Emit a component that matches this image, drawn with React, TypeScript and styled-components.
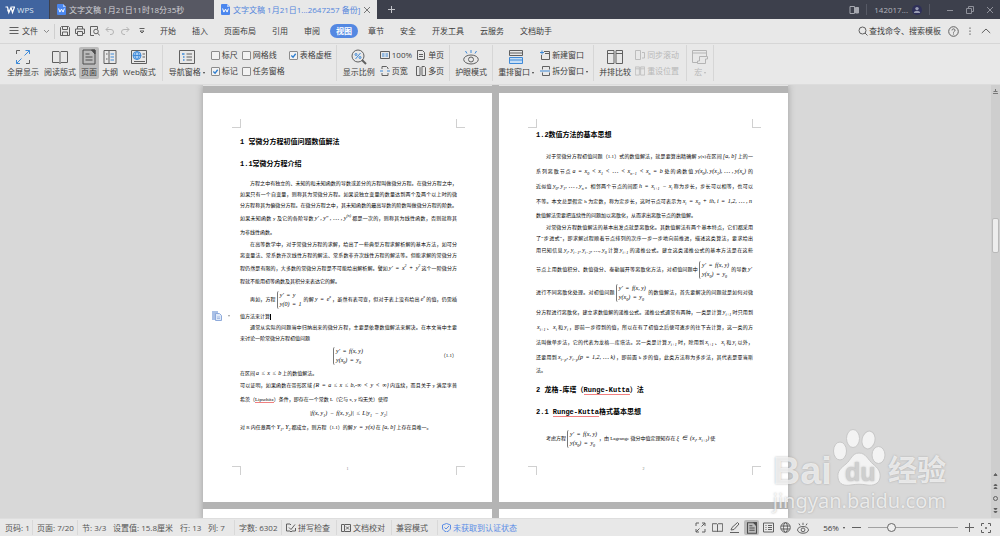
import React from "react";
import styled, { createGlobalStyle, css } from "styled-components";

const GlobalStyle = createGlobalStyle`
  * { box-sizing: border-box; }
  body { margin: 0; }
  body, button, input {
    font-family: "Open Sans", "Noto Sans CJK SC", sans-serif;
    font-size: 8px;
    line-height: 12px;
    color: #3c3c3c;
  }
  button { border: 0; padding: 0; background: none; white-space: nowrap; }
  svg { display: block; flex: none; }
`;

const Shell = styled.div`
  display: flex;
  flex-direction: column;
  height: 100vh;
  background: #e8e8e8;
  overflow: hidden;
`;

/* ---------- title bar ---------- */
const TitleBar = styled.header`
  display: flex;
  align-items: stretch;
  height: 19px;
  flex: none;
  background: #3d404c;
`;
const Brand = styled.button`
  display: flex;
  align-items: center;
  gap: 2px;
  width: 49px;
  padding-left: 5px;
  margin-right: 1px;
  background: #40649f;
  color: #dfe6f2;
`;
const Tab = styled.button<{ $active?: boolean }>`
  display: flex;
  align-items: center;
  gap: 3px;
  width: ${(p) => (p.$active ? 163 : 164)}px;
  padding-left: 7px;
  background: ${(p) => (p.$active ? "#e8e8e8" : "#575863")};
  color: ${(p) => (p.$active ? "#5486dc" : "#d2d2d6")};
`;
const AddTab = styled.button`
  display: flex;
  align-items: center;
  margin-left: 10px;
`;
const TitleTools = styled.div`
  display: flex;
  align-items: center;
  margin-left: auto;
  padding-right: 6px;
  gap: 7px;
  color: #a6a8b0;
`;
const Account = styled.button`
  display: flex;
  align-items: center;
  gap: 4px;
  color: #b4b5bc;
`;
const WindowButtons = styled.div`
  display: flex;
  align-items: center;
  gap: 12px;
  padding-left: 9px;
`;
const Rule = styled.i<{ $h: number; $color?: string }>`
  width: 1px;
  height: ${(p) => p.$h}px;
  flex: none;
  background: ${(p) => p.$color || "#cfcfcf"};
`;

/* ---------- menu ---------- */
const MenuBar = styled.nav`
  display: flex;
  align-items: center;
  height: 25px;
  flex: none;
  padding: 0 9px;
  border-bottom: 1px solid #d6d6d6;
`;
const FileButton = styled.button`
  display: flex;
  align-items: center;
  gap: 3px;
  margin-right: 5px;
`;
const QuickTools = styled.div`
  display: flex;
  align-items: center;
  gap: 5px;
  width: 94px;
  margin-left: 5px;
`;
const MenuItems = styled.div`
  display: flex;
  gap: 4px;
`;
const MenuItem = styled.button<{ $active?: boolean }>`
  height: 14px;
  padding: 0 6px;
  border-radius: 7px;
  ${(p) => p.$active && css`background: #5488e2; color: #fff; font-weight: 700;`}
`;
const MenuRight = styled.div`
  display: flex;
  align-items: center;
  gap: 7px;
  margin-left: auto;
`;
const SearchButton = styled.button`
  display: flex;
  align-items: center;
  gap: 1px;
`;

/* ---------- ribbon ---------- */
const Ribbon = styled.div`
  display: flex;
  align-items: center;
  height: 41px;
  flex: none;
  padding: 0 1px 2px;
  border-bottom: 1px solid #dcdcdc;
`;
const Group = styled.div<{ $gap?: number; $start?: number; $end?: number }>`
  display: flex;
  align-items: center;
  gap: ${(p) => p.$gap ?? 1}px;
  height: 36px;
  padding-left: ${(p) => p.$start ?? 4}px;
  padding-right: ${(p) => p.$end ?? 4}px;
  border-right: 1px solid #d6d6d6;
`;
const BigButton = styled.button<{ $active?: boolean; $off?: boolean }>`
  display: flex;
  flex-direction: column;
  align-items: center;
  gap: 1px;
  height: 32px;
  padding: 2px 2px 0;
  border-radius: 2px;
  background: ${(p) => (p.$active ? "#bbbbbb" : "none")};
  color: ${(p) => (p.$off ? "#b8b8b8" : "#3c3c3c")};
`;
const SmallGrid = styled.div<{ $cols: number }>`
  display: grid;
  grid-template-columns: repeat(${(p) => p.$cols}, auto);
  column-gap: 4px;
  row-gap: 4px;
`;
const SmallButton = styled.button<{ $off?: boolean }>`
  display: flex;
  align-items: center;
  gap: 2px;
  color: ${(p) => (p.$off ? "#b8b8b8" : "#3c3c3c")};
`;
const Check = styled.label`
  display: flex;
  align-items: center;
  gap: 2px;
  white-space: nowrap;
`;
const Box = styled.input`
  appearance: none;
  width: 9px;
  height: 9px;
  margin: 0;
  border: 1px solid #8c8c8c;
  border-radius: 1px;
  background: #f2f2f2;
  &:checked {
    background: #f2f2f2
      url("data:image/svg+xml,%3Csvg xmlns='http://www.w3.org/2000/svg' viewBox='0 0 8 8'%3E%3Cpath d='M1.5 4l2 2 3-4' fill='none' stroke='%232f7fd0' stroke-width='1.5'/%3E%3C/svg%3E");
  }
`;
const Arrow = styled.i`
  display: inline-block;
  margin-left: 2px;
  vertical-align: middle;
  border: 1px solid transparent;
  border-top: 2px solid currentColor;
  border-bottom: 0;
`;

/* ---------- document ---------- */
const Workspace = styled.main`
  position: relative;
  display: flex;
  flex: 1;
  min-height: 0;
  overflow: hidden;
  background: #d8d8d8;
`;
const Canvas = styled.div`
  display: flex;
  justify-content: center;
  align-items: flex-start;
  flex: 1;
  overflow: hidden;
`;
const Sheets = styled.div`
  display: grid;
  grid-template-columns: 289px 289px;
  gap: 7px;
  background: #b4b4b4;
  box-shadow: 0 0 7px #9c9c9c;
`;
const Edge = styled.div<{ $h: number }>`
  height: ${(p) => p.$h}px;
  background: ${(p) => (p.$h > 1 ? "#fff" : "#e4e4e4")};
`;
const Page = styled.article`
  position: relative;
  height: 409px;
  padding: 31px 35px 0 37px;
  background: #fff;
  color: #000;
  font-family: "Liberation Serif", "Noto Sans CJK SC", serif;
`;
const Corner = styled.i<{ $x: "left" | "right"; $y: "top" | "bottom" }>`
  position: absolute;
  width: 9px;
  height: 9px;
  ${(p) => (p.$x === "left" ? "left: 29px" : "right: 27px")};
  ${(p) => (p.$y === "top" ? "top: 26px" : "bottom: 27px")};
  border: 0 solid #d0d0d0;
  ${(p) => (p.$x === "left" ? "border-right-width: 1px" : "border-left-width: 1px")};
  ${(p) => (p.$y === "top" ? "border-bottom-width: 1px" : "border-top-width: 1px")};
`;
const PageNumber = styled.footer`
  position: absolute;
  left: 0;
  right: 0;
  bottom: 28px;
  text-align: center;
  font-size: 4px;
  line-height: 11px;
  color: #777;
`;
const Title = styled.h2<{ $top?: number }>`
  margin: ${(p) => p.$top ?? 0}px 0 0;
  font-family: "Liberation Mono", "Noto Sans CJK SC", monospace;
  font-size: 7px;
  line-height: 22px;
  font-weight: 700;
  white-space: nowrap;
`;
const Body = styled.div`
  margin-top: 3px;
  font-size: 5px;
`;
const Line = styled.div<{ $h?: 11 | 13 | 15 | 24; $full?: boolean; $indent?: boolean }>`
  height: ${(p) => p.$h ?? 11}px;
  line-height: ${(p) => p.$h ?? 11}px;
  padding-left: ${(p) => (p.$indent ? 10 : 0)}px;
  white-space: nowrap;
  text-align: justify;
  text-align-last: ${(p) => (p.$full ? "justify" : "left")};
`;
const Display = styled(Line)`
  display: grid;
  grid-template-columns: 1fr auto 1fr;
  align-items: center;
  text-align-last: right;
`;
const Formula = styled.span`
  display: inline-block;
  padding: 0 1px;
  font-style: italic;
  font-size: 6px;
  white-space: pre;
  text-align-last: left;
  sub, sup { font-size: 4px; line-height: 0; }
`;
const Operator = styled.span`
  margin: 0 1px;
`;
const Cases = styled.span`
  display: inline-block;
  vertical-align: middle;
  padding-left: 1px;
  margin: 0 1px;
  border-left: 1px solid #777;
  border-radius: 2px;
  line-height: 9px;
  text-align-last: left;
  > span { display: block; }
`;
const Misspelt = styled.span`
  border-bottom: 1px solid #f08080;
`;
const Caret = styled.i`
  display: inline-block;
  width: 1px;
  height: 6px;
  vertical-align: middle;
  background: #000;
`;
const PasteTag = styled.button`
  position: absolute;
  left: 9px;
  top: 217px;
  display: flex;
  align-items: center;
  gap: 4px;
  color: #999;
`;
const Scroll = styled.aside`
  display: flex;
  flex-direction: column;
  align-items: center;
  width: 9px;
  padding: 3px 0 4px;
  background: #cecece;
`;
const Thumb = styled.div`
  width: 7px;
  height: 35px;
  border: 1px solid #b9b9b9;
  border-radius: 2px;
  background: #ededed;
  margin-top: 123px;
`;
const PageJumps = styled.div`
  display: flex;
  flex-direction: column;
  gap: 5px;
  margin-top: auto;
`;
const Watermark = styled.div`
  position: absolute;
  right: 54px;
  bottom: 6px;
  color: rgba(255, 255, 255, 0.72);
  font-family: "Noto Sans", sans-serif;
  font-size: 20px;
  line-height: 22px;
  text-shadow: 0 0 2px rgba(130, 130, 130, 0.6);
`;
const WatermarkTop = styled.div`
  display: flex;
  align-items: flex-end;
  height: 57px;
  margin-bottom: 4px;
  font-family: "Liberation Sans", "Noto Sans CJK SC", sans-serif;
  font-weight: 700;
  font-size: 38px;
  line-height: 30px;
  small { font-size: 29px; }
`;

/* ---------- status bar ---------- */
const StatusBar = styled.footer`
  display: flex;
  align-items: center;
  height: 18px;
  flex: none;
  padding: 0 9px 0 5px;
  border-top: 1px solid #dedede;
  color: #555;
`;
const Stat = styled.button<{ $w: number; $rule?: boolean; $blue?: boolean }>`
  display: flex;
  align-items: center;
  gap: 2px;
  width: ${(p) => p.$w}px;
  height: 15px;
  margin-right: 4px;
  border-right: 1px solid ${(p) => (p.$rule ? "#d9d9d9" : "transparent")};
  color: ${(p) => (p.$blue ? "#5b8de6" : "#555")};
`;
const Views = styled.div`
  display: flex;
  align-items: center;
  gap: 2px;
  margin-left: auto;
  margin-right: 13px;
`;
const ViewButton = styled.button<{ $active?: boolean }>`
  display: grid;
  place-items: center;
  width: 15px;
  height: 15px;
  border-radius: 2px;
  background: ${(p) => (p.$active ? "#bcbcbc" : "none")};
`;
const Zoom = styled.div`
  display: flex;
  align-items: center;
  gap: 7px;
`;
const Slider = styled.input`
  appearance: none;
  width: 90px;
  height: 10px;
  margin: 0;
  background: linear-gradient(#a2a2a2, #a2a2a2) center / 100% 1px no-repeat;
  &::-webkit-slider-thumb {
    appearance: none;
    width: 9px;
    height: 9px;
    border: 1px solid #666;
    border-radius: 50%;
    background: #efefef;
  }
`;

/* ---------- icons ---------- */
const B = "#3f8ad8";
type IconProps = { s?: number; w?: number; c?: string; vb?: number; children: React.ReactNode };
const Icon = ({ s = 16, w = 1, c = "#606060", vb, children }: IconProps) => (
  <svg width={s} height={s} viewBox={`0 0 ${vb ?? s} ${vb ?? s}`} fill="none" stroke={c} strokeWidth={w} aria-hidden="true">
    {children}
  </svg>
);
const DocLogo = () => (
  <svg width="9" height="11" viewBox="0 0 9 11" aria-hidden="true">
    <path d="M1 0h5l3 3v7a1 1 0 0 1-1 1H1a1 1 0 0 1-1-1V1a1 1 0 0 1 1-1z" fill="#4a86ee" />
    <path d="M6 0l3 3H6z" fill="#a9c8fb" />
    <path d="M1.6 4.5l1.3 3.6 1.6-3 1.6 3 1.3-3.6" fill="none" stroke="#fff" />
  </svg>
);
const Plus = ({ c }: { c: string }) => (
  <Icon s={9} c={c}><path d="M4.5 1v7M1 4.500h7" /></Icon>
);
const EyeIcon = ({ s, c }: { s: number; c?: string }) => (
  <Icon s={s} vb={16} w={s > 12 ? 1 : 1.3}>
    <ellipse cx="8" cy="10.500" rx="7.300" ry="4.500" />
    <circle cx="8" cy="10.500" r="2.500" />
    <path d="M8 1v3M2.500 2l1.500 2.500M13.500 2L12 4.500" stroke={c} />
  </Icon>
);
const ColumnsIcon = ({ s, c }: { s: number; c?: string }) => (
  <Icon s={s} vb={16} c={c} w={s > 12 ? 1 : 1.4}><path d="M.5 1.500h6.500v13H.5zM9 1.500h6.500v13H9zM.5 4.500H7M9 4.500h6.500" /></Icon>
);
const BookIcon = ({ s }: { s: number }) => (
  <Icon s={s} vb={16} w={s > 12 ? 1 : 1.4}><path d="M8 3.500L7 2.500H.5v11H7l1 1 1-1h6.500v-11H9zM8 3.500v11" /></Icon>
);
const PageIcon = ({ s }: { s: number }) => (
  <Icon s={s} vb={16} c="#4c4c4c" w={s > 12 ? 1 : 1.4}>
    <path d="M2 1h12v14H2zM4.500 5h4M4.500 8h7M4.500 11h7" />
    <path d="M10.500 1H14v4z" fill="#4c4c4c" />
  </Icon>
);

/* ---------- formula helpers ---------- */
const M = ({ t }: { t: string }) => (
  <Formula>
    {t.split(/([_^](?:\{[^}]*\}|.)| [=<≤−+∈] )/).map((part, i) => {
      const inner = part.slice(1).replace(/[{}]/g, "");
      if (part[0] === "_") return <sub key={i}>{inner}</sub>;
      if (part[0] === "^") return <sup key={i}>{inner}</sup>;
      if (/^ . $/.test(part)) return <Operator key={i}>{part}</Operator>;
      return part;
    })}
  </Formula>
);
const Sys = ({ a = "y′ = f(x, y)", b = "y(x_0) = y_0" }: { a?: string; b?: string }) => (
  <Cases><span><M t={a} /></span><span><M t={b} /></span></Cases>
);
const Corners = () => (
  <>
    <Corner $x="left" $y="top" /><Corner $x="right" $y="top" />
    <Corner $x="left" $y="bottom" /><Corner $x="right" $y="bottom" />
  </>
);

const FirstPage = () => (
  <Page>
    <Corners />
    <Title $top={7}>1 常微分方程初值问题数值解法</Title>
    <Title>1.1常微分方程介绍</Title>
    <Body>
      <Line $full $indent>方程之中有独立的、未知的和未知函数的导数或差分的方程叫做微分方程。在微分方程之中，</Line>
      <Line $full>如果只有一个自变量，则称其为常微分方程。如果说独立变量的数量达到两个及两个以上时的微</Line>
      <Line $full>分方程称其为偏微分方程。在微分方程之中，其未知函数的最高导数的阶数叫做微分方程的阶数。</Line>
      <Line $full $h={15}>如果未知函数 y 及它的各阶导数<M t="y′ , y″ , ⋯ , y^{(n)}" />都是一次的，则称其为线性函数，否则就称其</Line>
      <Line $h={13}>为非线性函数。</Line>
      <Line $full $indent>在高等数学中，对于常微分方程的求解，给出了一些典型方程求解析解的基本方法，如可分</Line>
      <Line $full>离变量法、常系数齐次线性方程的解法、常系数非齐次线性方程的解法等。但能求解的常微分方</Line>
      <Line $full $h={15}>程仍然是有限的，大多数的常微分方程是不可能给出解析解。譬如<M t="y′ = x^2 + y^2" />这个一阶微分方</Line>
      <Line>程就不能用初等函数及其积分来表达它的解。</Line>
      <Line $full $indent $h={24}>再如，方程<Sys a="y′ = y" b="y(0) = 1" />的解<M t="y = e^x" />，虽然有表可查，但对于表上没有给出<M t="e^x" />的值，仍需插</Line>
      <Line>值方法来计算<Caret /></Line>
      <Line $full $indent>通常从实际的问题当中归纳出来的微分方程，主要是依靠数值解法来解决。在本文当中主要</Line>
      <Line>来讨论一阶常微分方程初值问题</Line>
      <Display $h={24}><span /><Sys /><span>（1.1）</span></Display>
      <Line>在区间<M t="a ≤ x ≤ b" />上的数值解法。</Line>
      <Line $full $h={13}>可以证明，如果函数在带形区域<M t="{R = a ≤ x ≤ b,-∞ < y < ∞}" />内连续，而且关于 y 满足李普</Line>
      <Line $h={15}>希茨（<Misspelt>Lipschitz</Misspelt>）条件，即存在一个常数 L（它与 x, y 均无关）使得</Line>
      <Display $h={13}><span /><M t="|f(x, y_1) − f(x, y_2)| ≤ L|y_1 − y_2|" /><span /></Display>
      <Line $h={15}>对 R 内任意两个<M t="Y_1, Y_2" />都成立，则方程（1.1）的解<M t="y = y(x)" />在<M t="[a, b]" />上存在且唯一。</Line>
    </Body>
    <PasteTag aria-label="粘贴选项">
      <svg width="10" height="11" viewBox="0 0 10 11" aria-hidden="true">
        <path d="M0 1h6v9H0z" fill="#a9c0e6" />
        <path d="M3.500 3.500h4l2 2v5h-6z" fill="#dfe9f8" stroke="#8eaadb" />
        <path d="M5 7h3M5 8.500h3" stroke="#8eaadb" strokeWidth=".7" />
      </svg>
      <Arrow />
    </PasteTag>
    <PageNumber>1</PageNumber>
  </Page>
);

const SecondPage = () => (
  <Page>
    <Corners />
    <Title>1.2数值方法的基本思想</Title>
    <Body>
      <Line $full $indent $h={15}>对于常微分方程初值问题（1.1）式的数值解法，就是要算出精确解 y(x)在区间<M t="[a, b]" />上的一</Line>
      <Line $full $h={15}>系列离散节点<M t="a = x_0 < x_1 < ⋯ < x_{n−1} < x_n = b" />处的函数值<M t="y(x_0), y(x_1), ⋯ , y(x_n)" />的</Line>
      <Line $full $h={15}>近似值<M t="y_0, y_1, ⋯ , y_n" />。相邻两个节点的间距<M t="h = x_{i+1} − x_i" />称为步长，步长可以相等，也可以</Line>
      <Line $full $h={15}>不等。本文总是假定 h 为定数，称为定步长，这时节点可表示为<M t="x_i = x_0 + ih, i = 1,2, ⋯ , n" /></Line>
      <Line $h={13}>数值解法需要把连续性的问题加以离散化，从而求出离散节点的数值解。</Line>
      <Line $full $indent>对常微分方程数值解法的基本出发点就是离散化。其数值解法有两个基本特点，它们都采用</Line>
      <Line $full>了“步进式”，即求解过程顺着节点排列的次序一步一步地向前推进，描述这类算法，要求给出</Line>
      <Line $full $h={13}>用已知信息<M t="y_i, y_{i−1}, y_{i−2}, …, y_0" />计算<M t="y_{i+1}" />的递推公式。建立这类递推公式的基本方法是在这些</Line>
      <Line $full $h={24}>节点上用数值积分、数值微分、泰勒展开等离散化方法，对初值问题中<Sys />的导数<M t="y′" /></Line>
      <Line $full $h={24}>进行不同离散化处理。对初值问题<Sys />的数值解法，首先要解决的问题就是如何对微</Line>
      <Line $full $h={15}>分方程进行离散化，建立求数值解的递推公式。递推公式通常有两种，一类是计算<M t="y_{i+1}" />时只用到</Line>
      <Line $full $h={15}><M t="x_{i+1}" />、<M t="x_i" />和<M t="y_i" />，即前一步得到的值，所以在有了初值之后便可逐步的往下去计算，这一类的方</Line>
      <Line $full $h={15}>法叫做单步法，它的代表为龙格—库塔法。另一类是计算<M t="y_{i+1}" />时，除用到<M t="x_{i+1}" />、<M t="x_i" />和<M t="y_i" />以外，</Line>
      <Line $full $h={15}>还要用到<M t="x_{i−p}, y_{i−p}(p = 1,2, ⋯ k)" />，即前面 k 步的值，此类方法称为多步法，其代表是亚当斯</Line>
      <Line>法。</Line>
    </Body>
    <Title $top={3}>2 龙格-库塔（<Misspelt>Runge-Kutta</Misspelt>）法</Title>
    <Title>2.1 <Misspelt>Runge-Kutta</Misspelt>格式基本思想</Title>
    <Body>
      <Line $indent $h={24}>考虑方程<Sys />，由 Lagrange 微分中值定理知存在<M t="ξ ∈ (x_i, x_{i+1})" />使</Line>
    </Body>
    <PageNumber>2</PageNumber>
  </Page>
);

const menu = ["开始", "插入", "页面布局", "引用", "审阅", "视图", "章节", "安全", "开发工具", "云服务", "文档助手"];

export default function App() {
  return (
    <Shell>
      <GlobalStyle />
      <TitleBar>
        <Brand>
          <Icon s={10} c="#fff" w={1.2}><path d="M.5 2h2l1.300 5.500L6 2.500l1.500 5L9.500 2H6.800M2.500 4.500L4 8" /></Icon>
          WPS
        </Brand>
        <Tab><DocLogo />文字文稿 1月21日11时18分35秒</Tab>
        <Tab $active>
          <DocLogo />文字文稿 1月21日1...2647257 备份]
          <Icon s={8} c="#777"><path d="M1 1l6 6M7 1L1 7" /></Icon>
        </Tab>
        <AddTab aria-label="新建"><Plus c="#c4c5ca" /></AddTab>
        <TitleTools>
          <Icon s={10} c="#a6a8b0"><path d="M1 1.500h4.500v7H1z" /><path d="M6.500 2.500h3v5.500h-3z" fill="#a6a8b0" /></Icon>
          <Rule $h={11} $color="#575a66" />
          <Account>
            142017...
            <svg width="10" height="10" viewBox="0 0 10 10" aria-hidden="true">
              <circle cx="5" cy="5" r="5" fill="#2f3059" />
              <circle cx="5" cy="3.600" r="1.700" fill="#9a9db3" />
              <path d="M1.800 8c.3-3 6.100-3 6.400 0z" fill="#9a9db3" />
            </svg>
          </Account>
          <Rule $h={11} $color="#575a66" />
          <WindowButtons>
            <Icon s={8} c="#8f919a"><path d="M1 4.500h6" /></Icon>
            <Icon s={8} c="#8f919a"><path d="M.5 2.500h5v5h-5zM2.500 2.500v-2h5v5h-2" /></Icon>
            <Icon s={8} c="#8f919a"><path d="M1 1l6 6M7 1L1 7" /></Icon>
          </WindowButtons>
        </TitleTools>
      </TitleBar>

      <MenuBar>
        <FileButton>
          <Icon s={10}><path d="M.5 1.500h9M.5 4.500h9M.5 7.500h9" /></Icon>
          文件
          <Icon s={8} c="#8a8a8a"><path d="M3 3l2.500 2.500L8 3" /></Icon>
        </FileButton>
        <Rule $h={15} />
        <QuickTools>
          <Icon s={10}><path d="M.5 1.500l1-1h7l1 1v8h-9zM2.500.5v3h5v-3M2.500 9.500V6h5v3.500" /></Icon>
          <Icon s={10}><path d="M2.500 3V.500h5V3M2.500 7.500h-2V3h9v4.500h-2M2.500 5.500h5v4h-5z" /></Icon>
          <Icon s={10}><path d="M4 9.500H.5v-9h7V3" /><circle cx="6" cy="5.500" r="2.300" /><path d="M7.700 7.200l2 2.300" /></Icon>
          <Icon s={10} c="#b4b4b4"><path d="M3.500 1L1 3.500 3.500 6M1 3.500h5a2.500 2.500 0 0 1 0 5H5" /></Icon>
          <Icon s={10} c="#b4b4b4"><path d="M6.500 1L9 3.500 6.500 6M9 3.500H4a2.500 2.500 0 0 0 0 5h1" /></Icon>
          <Icon s={10}><path d="M4.500 2.500h5M5 5h4L7 7z" /></Icon>
        </QuickTools>
        <MenuItems>
          {menu.map((m) => <MenuItem key={m} $active={m === "视图"}>{m}</MenuItem>)}
        </MenuItems>
        <MenuRight>
          <SearchButton>
            <Icon s={10}><circle cx="4.500" cy="4.500" r="3.500" /><path d="M7 7l2.500 2.500" /></Icon>
            查找命令、搜索模板
          </SearchButton>
          <Icon s={11}><circle cx="5.500" cy="5.500" r="4.800" /><path d="M4 4.400c0-2 3-2 3 0 0 1-1.500 1-1.500 2.200M5.500 7.500v1" /></Icon>
          <Icon s={8} w={1.2}><path d="M4 .5v1.300M4 3.500v1.300M4 6.500v1.300" /></Icon>
          <Icon s={10}><path d="M.8 7L5 3l4.200 4" /></Icon>
        </MenuRight>
      </MenuBar>

      <Ribbon>
        <Group>
          <BigButton>
            <Icon>
              <path d="M1.500 5V1.500H5M14.500 11v3.500H11" />
              <path d="M9.500 6.500l5-5M10.500 1.500h4V5M6.500 9.500l-5 5M1.500 11v3.500H5" stroke={B} />
            </Icon>
            全屏显示
          </BigButton>
          <BigButton><BookIcon s={16} />阅读版式</BigButton>
          <BigButton $active><PageIcon s={16} />页面</BigButton>
          <BigButton>
            <Icon><path d="M2 1.500h12v13H2zM7 1.500v13M4 5h1.500M4 10h1.500" /><path d="M8.500 5H12M8.500 8H12M8.500 11H12" stroke={B} /></Icon>
            大纲
          </BigButton>
          <BigButton>
            <Icon><path d="M.5 1.500h15v13H.5zM11.500 5H14M11.500 8H14M3 12.500h11" /><circle cx="6" cy="6.500" r="4" stroke={B} fill="#a9cdf3" /><path d="M2 6.500h8M6 2.500c-2.500 2-2.500 6 0 8M6 2.500c2.500 2 2.500 6 0 8" stroke={B} /></Icon>
            Web版式
          </BigButton>
        </Group>
        <Group $gap={4}>
          <BigButton>
            <Icon><path d="M.5 1.500h15v13H.5zM7.500 5H13M7.500 8H13M7.500 11H13" /><path d="M3 5h2.500M4 8h1.500M4 11h1.500" stroke={B} strokeWidth="1.5" /></Icon>
            <span>导航窗格<Arrow /></span>
          </BigButton>
          <SmallGrid $cols={3}>
            <Check><Box type="checkbox" />标尺</Check>
            <Check><Box type="checkbox" />网格线</Check>
            <Check><Box type="checkbox" defaultChecked />表格虚框</Check>
            <Check><Box type="checkbox" defaultChecked />标记</Check>
            <Check><Box type="checkbox" />任务窗格</Check>
          </SmallGrid>
        </Group>
        <Group $gap={3} $end={5}>
          <BigButton>
            <Icon><circle cx="7" cy="7" r="6" /><path d="M11 11l4 4" strokeWidth="2" /><path d="M9.500 4l-5 6" stroke={B} /><circle cx="5" cy="5.500" r="1" stroke={B} /><circle cx="9" cy="8.500" r="1" stroke={B} /></Icon>
            显示比例
          </BigButton>
          <SmallGrid $cols={2}>
            <SmallButton><Icon s={10}><path d="M.5 1.500h9v7h-9z" /><path d="M3 3v4M7 3v4M5 3.500v1M5 5.500v1" stroke={B} /></Icon>100%</SmallButton>
            <SmallButton><Icon s={10}><path d="M1.500.5h5l2 2v7h-7zM3 4.500h4M3 6.500h4" /></Icon>单页</SmallButton>
            <SmallButton><Icon s={10}><path d="M2 3V.500h4.500l1.500 1.500v1M2 7v2.500h6V7" /><path d="M0 5h3M7 5h3" stroke={B} /></Icon>页宽</SmallButton>
            <SmallButton><Icon s={10}><path d="M.5.5h2.500l1 1v8H.5zM6 .5h2.500l1 1v8H6z" /></Icon>多页</SmallButton>
          </SmallGrid>
        </Group>
        <Group $start={3} $end={3}>
          <BigButton><EyeIcon s={16} c={B} />护眼模式</BigButton>
        </Group>
        <Group $start={3} $end={5} $gap={4}>
          <BigButton>
            <Icon><path d="M1.500 1.500h13v5h-13zM1.500 4h13" /><path d="M1.500 8.500h13v6h-13zM1.500 11h13" stroke={B} fill="#c6def6" /></Icon>
            <span>重排窗口<Arrow /></span>
          </BigButton>
          <SmallGrid $cols={1}>
            <SmallButton><Icon s={10}><path d="M4 1.500h5.500v8h-8V5M5 3.500h4" /><path d="M2 .5v4M0 2.500h4" stroke={B} /></Icon>新建窗口</SmallButton>
            <SmallButton><Icon s={10}><path d="M2.500 3.500v-3h7v3M2.500 6.500v3h7v-3" /><path d="M0 5h10" stroke={B} /></Icon><span>拆分窗口<Arrow /></span></SmallButton>
          </SmallGrid>
        </Group>
        <Group $start={3} $end={7} $gap={2}>
          <BigButton><ColumnsIcon s={16} />并排比较</BigButton>
          <SmallGrid $cols={1}>
            <SmallButton $off><Icon s={10} c="#bdbdbd"><path d="M.5.5h5v9h-5zM7 2.500h2.500v5.500H7" /></Icon>同步滚动</SmallButton>
            <SmallButton $off><ColumnsIcon s={10} c="#bdbdbd" />重设位置</SmallButton>
          </SmallGrid>
        </Group>
        <Group $start={3} $end={3}>
          <BigButton $off>
            <Icon c="#b4b4b4"><path d="M5 13.500H.5v-12h14V7M.5 4h14M7.500 7.500h8v2.500h-2v4.500h-8V12h2z" /></Icon>
            <span>宏<Arrow /></span>
          </BigButton>
        </Group>
      </Ribbon>

      <Workspace>
        <Canvas>
          <Sheets>
            <Edge $h={1} /><Edge $h={1} />
            <FirstPage />
            <SecondPage />
            <Edge $h={12} /><Edge $h={12} />
          </Sheets>
        </Canvas>
        <Scroll>
          <Icon s={7} c="#777"><path d="M3.500 1v2M1.500 3.500h4M1 5.500h5" /></Icon>
          <Thumb />
          <PageJumps>
            <Icon s={7}><path d="M3.500 2.500l1.500 2H2z" fill="#666" /></Icon>
            <Icon s={7}><path d="M2 2.500l1.500-1.500L5 2.500zM2 5.500L3.500 4 5 5.500z" fill="#666" /></Icon>
            <Icon s={7}><circle cx="3.500" cy="3.500" r="2" /></Icon>
            <Icon s={7}><path d="M2 1.500h3L3.500 3zM2 4.500h3L3.500 6z" fill="#666" /></Icon>
          </PageJumps>
        </Scroll>
        <Watermark>
          <WatermarkTop>
            Bai
            <svg width="56" height="58" viewBox="0 0 56 58" aria-hidden="true">
              <g fill="#f3f3f3" stroke="#c8c8c8">
                <ellipse cx="8" cy="23" rx="6.500" ry="9" />
                <ellipse cx="21" cy="10.500" rx="6.500" ry="9" />
                <ellipse cx="36.500" cy="12" rx="6.500" ry="9" transform="rotate(12 36.500 12)" />
                <ellipse cx="46.500" cy="27" rx="6.500" ry="8.500" />
                <path d="M27 25c7 0 9 7 14 11s8 8 7 14-7 8-13 7-10-1-16 0-12 0-13-7 3-10 8-14 6-11 13-11z" />
              </g>
              <text x="13" y="53" fill="#cfcfcf" fontFamily="Liberation Sans" fontWeight="700" fontSize="25">du</text>
            </svg>
            <small>经验</small>
          </WatermarkTop>
          jingyan.baidu.com
        </Watermark>
      </Workspace>

      <StatusBar>
        <Stat $w={28} $rule>页码: 1</Stat>
        <Stat $w={41} $rule>页面: 7/20</Stat>
        <Stat $w={27}>节: 3/3</Stat>
        <Stat $w={63}>设置值: 15.8厘米</Stat>
        <Stat $w={24}>行: 13</Stat>
        <Stat $w={27} $rule>列: 7</Stat>
        <Stat $w={43} $rule>字数: 6302</Stat>
        <Stat $w={51} $rule>
          <Icon s={10}><path d="M5 2L4 1H.5v7H4l1 1 1-1h3.500V5M3 4.500l2 2L9 1.500" /></Icon>拼写检查
        </Stat>
        <Stat $w={51} $rule>
          <Icon s={10}><path d="M3 1.500H.5v7H3M3.500 1.500h6v7h-6zM5 3.500l3 3M8 3.500l-3 3" /></Icon>文档校对
        </Stat>
        <Stat $w={42} $rule>兼容模式</Stat>
        <Stat $w={76} $blue>
          <Icon s={9} c="#5b8de6"><path d="M4.500.5L8.500 2v3c0 2-2 3-4 4-2-1-4-2-4-4V2zM2.500 4.500L4 6l3-3" /></Icon>未获取到认证状态
        </Stat>
        <Views>
          <ViewButton aria-label="全屏显示"><Icon s={11}><path d="M1 4V1h3M7 1h3v3M10 7v3H7M4 10H1V7M6.500 4.500L10 1M4.500 6.500L1 10" /></Icon></ViewButton>
          <ViewButton aria-label="阅读版式"><BookIcon s={11} /></ViewButton>
          <ViewButton aria-label="写作模式"><Icon s={11}><path d="M2 8l1-2.500L8.500.500l1.500 1.500L5 7.500 2 8zM1 10.500h9" /></Icon></ViewButton>
          <ViewButton $active aria-label="页面"><PageIcon s={12} /></ViewButton>
          <ViewButton aria-label="大纲"><Icon s={11}><path d="M.5 1h10v9H.5zM2.500 3.500h1M5 3.500h4M2.500 5.500h1M5 5.500h4M2.500 7.500h1M5 7.500h4" /></Icon></ViewButton>
          <ViewButton aria-label="Web版式"><Icon s={11}><circle cx="5.500" cy="5.500" r="4.800" /><ellipse cx="5.500" cy="5.500" rx="2" ry="4.800" /><path d="M1 4h9M1 7h9" /></Icon></ViewButton>
          <ViewButton aria-label="护眼模式"><EyeIcon s={12} /></ViewButton>
        </Views>
        <Zoom>
          <button>56% <Arrow /></button>
          <button aria-label="缩小"><Icon s={9}><path d="M0 4.500h9" /></Icon></button>
          <Slider type="range" min={0} max={100} defaultValue={23} aria-label="显示比例" />
          <button aria-label="放大"><Icon s={9}><path d="M4.500 0v9M0 4.500h9" /></Icon></button>
          <Icon s={10}><path d="M.5 3V.500H3M7 .5h2.500V3M9.500 7v2.500H7M3 9.500H.5V7M4 5h2M5 4v2" /></Icon>
        </Zoom>
      </StatusBar>
    </Shell>
  );
}
